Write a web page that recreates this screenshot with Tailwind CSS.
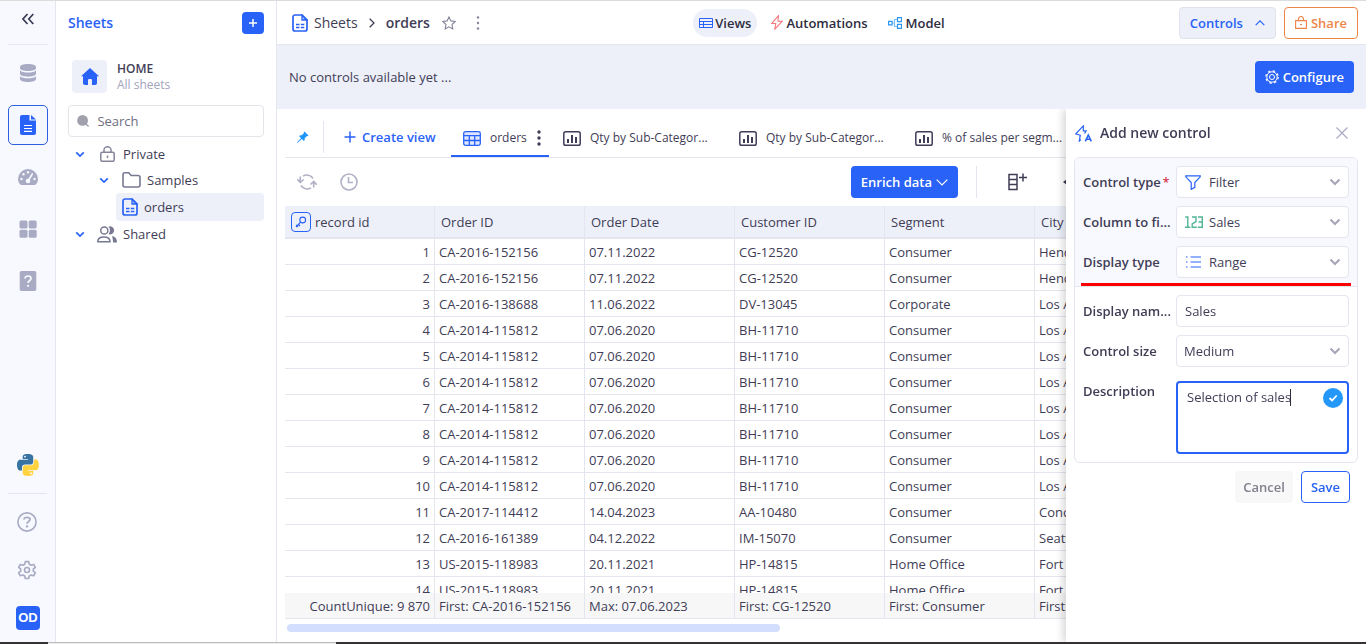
<!DOCTYPE html>
<html lang="en">
<head>
<meta charset="utf-8">
<title>orders - Sheets</title>
<meta name="viewport" content="width=device-width, initial-scale=1">
<script src="https://cdn.jsdelivr.net/npm/@tailwindcss/browser@4"></script>
</head>
<body class="flex h-screen flex-col overflow-hidden border-t border-[#dcdcdc] bg-white font-['Open_Sans','Noto_Sans',sans-serif] text-[13px] leading-5 text-[#3f3d56]">

<svg class="hidden" aria-hidden="true">
  <symbol id="sheet" viewBox="0 0 16 18"><path d="M3 1h7l5 5v9a2 2 0 0 1-2 2H3a2 2 0 0 1-2-2V3a2 2 0 0 1 2-2z" fill="none" stroke="currentColor" stroke-width="1.7"/><path d="M10 1v5h5z" fill="currentColor" fill-opacity=".35" stroke="currentColor" stroke-width="1.3"/><path d="M4 10.5h3.5M8.800 10.5h3.500M4 13.500h3.500M8.800 13.500h3.500" stroke="currentColor" stroke-width="1.500"/></symbol>
  <symbol id="down" viewBox="0 0 12 8"><path d="M1.500 1.500 6 6l4.500-4.500" fill="none" stroke="currentColor" stroke-width="2"/></symbol>
  <symbol id="chart" viewBox="0 0 18 15"><rect x=".8" y=".8" width="16.400" height="13.400" rx="1.800" fill="none" stroke="currentColor" stroke-width="1.500"/><path d="M5 12V8M9 12V4M13 12V6" stroke="currentColor" stroke-width="2"/></symbol>
</svg>

<div class="flex min-h-0 flex-1">
  <nav aria-label="Main" class="flex w-14 shrink-0 flex-col border-r border-[#e4e5ee] bg-[#f8f9fe] px-2 pb-1 text-[#a9abc4]">
    <button aria-label="Collapse" class="-mr-1 flex h-11 w-10 shrink-0 items-center justify-center border-b border-[#e4e5ee] pb-2 text-[#3a3b56]">
      <svg class="h-3 w-3" viewBox="0 0 12 12" fill="none" stroke="currentColor" stroke-width="1.700"><path d="M5.500 1 1 6l4.500 5M11.300 1 6.800 6l4.500 5"/></svg>
    </button>
    <div class="mt-2 flex flex-col gap-3">
      <a href="#" aria-label="Data" class="flex h-10 w-10 items-center justify-center"><svg class="h-5 w-4" viewBox="0 0 16 20" fill="currentColor"><path d="M0 4c0-1.700 3.500-3 8-3s8 1.300 8 3v1.300C16 7 12.500 8 8 8S0 7 0 5.300z"/><path d="M0 7.500C1.500 9 4.500 9.600 8 9.600S14.500 9 16 7.500v3.300c0 1.700-3.500 2.900-8 2.900s-8-1.200-8-2.900z"/><path d="M0 13.200c1.500 1.500 4.500 2 8 2s6.500-.5 8-2V16c0 1.700-3.500 3-8 3s-8-1.300-8-3z"/></svg></a>
      <a href="#" aria-label="Sheets" class="flex h-10 w-10 items-center justify-center rounded-[5px] border border-[#2d5fe0] bg-[#f4f7ff] text-[#2962f6]"><svg class="h-5 w-4" viewBox="0 0 16 20" fill="currentColor"><path d="M2 0h7.500v5.500H16V18a2 2 0 0 1-2 2H2a2 2 0 0 1-2-2V2a2 2 0 0 1 2-2z"/><path d="M11 0l5 4.500h-5z"/><path d="M4 10.500h8M4 13.500h8M4 16.300h8" stroke="#fff" stroke-width="1.200"/></svg></a>
      <a href="#" aria-label="Dashboards" class="flex h-10 w-10 items-center justify-center"><svg class="h-4 w-5" viewBox="0 0 20 16"><path d="M3 16C1 14.300 0 12.500 0 10a10 10 0 0 1 20 0c0 2.500-1 4.300-3 6z" fill="currentColor"/><g fill="#f8f9fe"><circle cx="3.500" cy="10" r="1.200"/><circle cx="5.500" cy="5.300" r="1.200"/><circle cx="10" cy="3.200" r="1.200"/><circle cx="16.500" cy="10" r="1.200"/><circle cx="10" cy="12" r="2.300"/></g><path d="m10 12 4.300-7" stroke="#f8f9fe" stroke-width="1.600" stroke-linecap="round"/></svg></a>
      <a href="#" aria-label="Apps" class="flex h-10 w-10 items-center justify-center"><svg class="h-[18px] w-[18px]" viewBox="0 0 18 18" fill="currentColor"><rect x=".5" y=".5" width="8" height="8" rx="1.500"/><rect x="9.700" y=".5" width="8" height="8" rx="1.500"/><rect x=".5" y="9.700" width="8" height="8" rx="1.500"/><rect x="9.700" y="9.700" width="8" height="8" rx="1.500"/></svg></a>
      <a href="#" aria-label="Guide" class="flex h-10 w-10 items-center justify-center"><svg class="h-5 w-[18px]" viewBox="0 0 18 20"><rect x=".7" width="16.600" height="20" rx="1.800" fill="currentColor"/><path d="M6 7.500C6 5.700 7.300 5 9 5s3.100.9 3.100 2.600C12.100 9.500 9 9.600 9 12" fill="none" stroke="#f8f9fe" stroke-width="1.700"/><circle cx="9" cy="14.800" r="1.100" fill="#f8f9fe"/></svg></a>
    </div>
    <a href="#" aria-label="Python" class="mt-auto flex h-10 w-10 items-center justify-center"><svg class="h-[22px] w-[22px]" viewBox="0 0 110 110"><path fill="#3873a3" d="M54 0C27 0 28.500 12 28.500 12v12.500h26.200v3.700H18S0 26 0 54.500 15.500 82 15.500 82H25V68.500S24.500 53 40.300 53h26S81 53.200 81 38.700V14.500S83.300 0 54 0zM39.800 8.400a4.700 4.700 0 1 1 0 9.400 4.700 4.700 0 0 1 0-9.400z"/><path fill="#ffd23f" d="M55.500 109.500c27 0 25.500-12 25.500-12V85H54.800v-3.700h36.700s18 2.200 18-26.300S94 27.500 94 27.500h-9.500V41s.5 15.500-15.300 15.500h-26S28.500 56.300 28.500 70.800V95s-2.300 14.500 27 14.500zm14.200-8.400a4.700 4.700 0 1 1 0-9.400 4.700 4.700 0 0 1 0 9.400z"/></svg></a>
    <hr class="my-2 border-[#e4e5ee]">
    <div class="flex flex-col gap-2">
      <a href="#" aria-label="Help" class="flex h-10 w-[38px] items-center justify-center"><svg class="h-5 w-5" viewBox="0 0 20 20" fill="none" stroke="currentColor" stroke-width="1.600"><circle cx="10" cy="10" r="9.100"/><path d="M7 7.600C7 6 8.300 5.300 10 5.300s3 .8 3 2.300c0 1.900-3 2-3 4.200" stroke-width="1.800"/><circle cx="10" cy="14.400" r="1.200" fill="currentColor" stroke="none"/></svg></a>
      <a href="#" aria-label="Settings" class="flex h-10 w-[38px] items-center justify-center"><svg class="h-5 w-5" viewBox="0 0 24 24" fill="none" stroke="currentColor" stroke-width="2"><circle cx="12" cy="12" r="3"/><path d="M10 2h4l.7 3 2.300 1.300 3-1 2 3.500-2.400 2v2.600l2.400 2-2 3.500-3-1-2.300 1.300-.7 3h-4l-.7-3L7 17.900l-3 1-2-3.500 2.400-2v-2.600L2 8.800l2-3.500 3 1L9.300 5z" stroke-linejoin="round"/></svg></a>
      <button class="flex h-10 w-10 items-center justify-center"><span class="flex h-6 w-6 items-center justify-center rounded bg-[#2962f6] font-['Liberation_Sans',sans-serif] text-[13px] font-bold text-white">OD</span></button>
    </div>
  </nav>

  <aside class="flex w-[221px] shrink-0 flex-col border-r border-[#e4e5ee] px-3">
    <div class="flex h-11 items-center justify-between">
      <h2 class="text-[14px] font-[550] text-[#2962f6]">Sheets</h2>
      <button aria-label="Add sheet" class="flex h-[22px] w-[22px] items-center justify-center rounded bg-[#2962f6] text-white"><svg class="h-2 w-2" viewBox="0 0 8 8" stroke="currentColor" stroke-width="1.500"><path d="M4 0v8M0 4h8"/></svg></button>
    </div>
    <a href="#" class="mt-3.5 flex items-center gap-2.5 px-1">
      <span class="flex h-[33px] w-[35px] items-center justify-center rounded bg-[#edf0f9] text-[#2962f6]"><svg class="h-[17px] w-[18px]" viewBox="0 0 18 17" fill="currentColor"><path d="M9 0 0 8.300h2V15c0 1.200.8 2 2 2h3v-4.500c0-1 .5-1.500 1.200-1.500h1.600c.7 0 1.200.5 1.200 1.500V17h3c1.200 0 2-.8 2-2V8.300h2z"/></svg></span>
      <span class="flex flex-col text-xs leading-4"><span class="pt-0.5 font-[550]">HOME</span><span class="text-[#a3a4bd]">All sheets</span></span>
    </a>
    <label class="mt-3 flex h-8 shrink-0 items-center gap-2 rounded border border-[#e4e4ea] px-2 text-[#a1a1ae]">
      <svg class="h-[14px] w-[14px]" viewBox="0 0 14 14"><circle cx="6.300" cy="6.300" r="6.100" fill="currentColor"/><path d="m10 10 3 3.300" stroke="currentColor" stroke-width="1.600"/></svg>
      <input type="text" aria-label="Search" placeholder="Search" class="w-full min-w-0 bg-transparent outline-none placeholder:text-[#6f6e80]">
    </label>
    <ul class="mt-1">
      <li class="flex h-[26px] items-center pl-[7px]"><svg class="h-[7px] w-2.5 text-[#2962f6]"><use href="#down"/></svg>
        <svg class="mr-2 ml-[15px] h-4 w-[15px] text-[#85859c]" viewBox="0 0 15 16" fill="none" stroke="currentColor" stroke-width="1.500"><rect x=".8" y="6.300" width="13.400" height="9" rx="1.500"/><path d="M4 6V4a3.500 3.200 0 0 1 7 0v2M7.500 9.500v2.500"/></svg>Private</li>
      <li class="flex h-[26px] items-center pl-[31px]"><svg class="h-[7px] w-2.5 text-[#2962f6]"><use href="#down"/></svg>
        <svg class="mr-1.5 ml-[13px] h-4 w-[19px] text-[#777891]" viewBox="0 0 19 16" fill="none" stroke="currentColor" stroke-width="1.600"><path d="M1 13V2.500Q1 .8 2.700.8h4l2.500 2.700H16q2 0 2 2V13q0 2-2 2H3q-2 0-2-2z"/></svg>Samples</li>
      <li><a href="#" class="ml-12 flex h-7 items-center gap-1.5 rounded bg-[#edf0f9] pl-1.5"><svg class="h-[18px] w-4 text-[#2962f6]"><use href="#sheet"/></svg>orders</a></li>
      <li class="flex h-[26px] items-center pl-[7px]"><svg class="h-[7px] w-2.5 text-[#2962f6]"><use href="#down"/></svg>
        <svg class="mr-1.5 ml-3 h-[17px] w-5 text-[#777891]" viewBox="0 0 20 17" fill="none" stroke="currentColor" stroke-width="1.500"><path d="M11.500.7a4 4 0 1 1 0 7.300c2-2 2-5.300 0-7.300zM15 10c3.300.6 5 2.700 5 6.500h-4c0-2.500-.4-4.600-1-6.500z" fill="currentColor" stroke="none"/><circle cx="7.300" cy="4.500" r="3.600"/><path d="M.8 15.700c0-3 2.300-4.700 6-4.700s6.200 1.700 6.200 4.700z"/></svg>Shared</li>
    </ul>
  </aside>

  <main class="flex min-w-0 flex-1 flex-col">
    <header class="grid h-11 shrink-0 grid-cols-[1fr_auto_1fr] items-center border-b border-[#e4e5ee] pr-2 pl-[15px]">
      <div class="flex items-center text-[14px]">
        <svg class="mr-1.5 h-[18px] w-4 text-[#2962f6]"><use href="#sheet"/></svg>
        <a href="#">Sheets</a>
        <svg class="mx-[11px] h-2.5 w-[6px]" viewBox="0 0 6 10" fill="none" stroke="currentColor" stroke-width="1.300"><path d="m.7.700 4.300 4.300L.7 9.300"/></svg>
        <span class="font-[550]">orders</span>
        <button aria-label="Favourite" class="ml-3 text-[#85859c]"><svg class="h-[14px] w-[14px]" viewBox="0 0 14 14" fill="none" stroke="currentColor" stroke-width="1.100"><path d="M7 .9l1.900 4 4.300.6-3.200 3 .8 4.400L7 10.800l-3.800 2.100.8-4.400-3.200-3 4.300-.6z"/></svg></button>
        <button aria-label="More" class="ml-5 text-[#85859c]"><svg class="h-[14px] w-1" viewBox="0 0 4 14" fill="currentColor"><circle cx="2" cy="1.500" r="1.200"/><circle cx="2" cy="7" r="1.200"/><circle cx="2" cy="12.500" r="1.200"/></svg></button>
      </div>
      <nav aria-label="Sections" class="mr-1.5 flex gap-2 font-[550] text-[#2e2d40]">
        <a href="#" class="flex h-7 items-center gap-0.5 rounded-full bg-[#edf0f9] px-1.5"><svg class="h-2.5 w-[14px]" viewBox="0 0 14 10" fill="none" stroke="#2962f6"><path d="M.5.500h13v9H.5zM.5 3.500h13M.5 6.500h13M4.500 3.500v6"/></svg>Views</a>
        <a href="#" class="flex h-7 items-center gap-[3px] px-1.5"><svg class="h-[15px] w-3" viewBox="0 0 12 15" fill="none" stroke="#f47a80" stroke-width="1.100"><path d="M7.500.7.8 8.500h4L3.800 14.200 11.200 6.200H7z"/></svg>Automations</a>
        <a href="#" class="flex h-7 items-center gap-1 px-1.5"><svg class="h-3 w-[14px]" viewBox="0 0 14 12" fill="none" stroke="#2a97f5" stroke-width="1.200"><path d="M9.500.6h4v4h-4zM9.500 7.400h4v4h-4zM.6 4.300h3.500v3.500H.6z"/><path d="M4 6h2.500M9.500 2.500h-3v7h3" stroke-opacity=".6"/></svg>Model</a>
      </nav>
      <div class="flex justify-end gap-2">
        <button class="flex h-8 items-center gap-3 rounded border border-[#e0e2ec] bg-[#edf0f9] px-2.5 font-[550] text-[#2962f6]">Controls<svg class="h-1.5 w-2.5" viewBox="0 0 10 6" fill="none" stroke="currentColor" stroke-width="1.200"><path d="m.7 5.200 4.300-4.300 4.300 4.300"/></svg></button>
        <button class="flex h-8 items-center gap-1 rounded border border-[#ee8548] px-2.5 font-[550] text-[#ee8548]"><svg class="h-[13px] w-3" viewBox="0 0 12 13" fill="none" stroke="currentColor" stroke-width="1.100"><path d="M.6 4.600h10.800v7.800H.6zM3.500 4.500V3a2.500 2.500 0 0 1 5 0v1.500M5 8.500h2"/></svg>Share</button>
      </div>
    </header>

    <section class="flex h-16 shrink-0 items-center justify-between bg-[#edf0f9] px-3 font-medium">
      <p>No controls available yet ...</p>
      <button class="flex h-8 items-center gap-1 rounded bg-[#2962f6] px-2.5 font-[550] text-white"><svg class="h-[14px] w-[14px]" viewBox="0 0 14 14" fill="none" stroke="currentColor"><circle cx="7" cy="7" r="2.500"/><circle cx="7" cy="7" r="5.200"/><circle cx="7" cy="7" r="6.200" stroke-width="1.200" stroke-dasharray="2.400 2.470"/></svg>Configure</button>
    </section>

    <div class="relative flex min-h-0 flex-1 flex-col overflow-hidden pl-2">
      <div class="flex h-[49px] shrink-0 items-center overflow-hidden border-b border-[#e4e5ee] pt-2 whitespace-nowrap">
        <button aria-label="Pin" class="flex h-8 w-[39px] shrink-0 items-center border-r border-[#e4e5ee] pl-3 text-[#1e96fb]"><svg class="h-3 w-3" viewBox="0 0 12 12" fill="currentColor"><path d="M7.500.5 11.500 4.500 10.300 5.300 9.700 5.200 7.700 7.300c.2 1.200 0 2-.8 2.700L4.800 8 1 11.600 0 12l.4-1L4 7.200 2 5.100c.8-.8 1.600-1 2.700-.8l2.100-2-.1-.7z"/></svg></button>
        <button class="flex w-[127px] shrink-0 items-center gap-1.5 pl-5 font-[550] text-[#2962f6]"><svg class="h-3 w-3" viewBox="0 0 12 12" stroke="currentColor" stroke-width="1.500"><path d="M6 .5v11M.5 6h11"/></svg>Create view</button>
        <div class="flex h-10 w-[98px] shrink-0 items-center border-b-2 border-[#2962f6] pt-1 pr-2 pl-3 text-xs">
          <svg class="mr-[9px] h-[15px] w-[18px]" viewBox="0 0 18 15" fill="none" stroke="#2962f6" stroke-width="1.300"><rect x=".7" y=".7" width="16.600" height="13.600" rx="1.800" fill="#dce6ff"/><path d="M.7 4.700h16.600M.7 9.500h16.600M6.300 4.700v9.600M11.700 4.700v9.600"/></svg><a href="#">orders</a>
          <button aria-label="View menu" class="ml-auto"><svg class="h-4 w-1" viewBox="0 0 4 16" fill="currentColor"><circle cx="2" cy="2" r="1.700"/><circle cx="2" cy="8" r="1.700"/><circle cx="2" cy="14" r="1.700"/></svg></button>
        </div>
        <a href="#" class="ml-0.5 flex w-44 shrink-0 items-center gap-[9px] pt-0.5 pl-3 text-xs"><svg class="h-[15px] w-[18px]"><use href="#chart"/></svg>Qty by Sub-Categor...</a>
        <a href="#" class="flex w-44 shrink-0 items-center gap-[9px] pt-0.5 pl-3 text-xs"><svg class="h-[15px] w-[18px]"><use href="#chart"/></svg>Qty by Sub-Categor...</a>
        <a href="#" class="flex w-44 shrink-0 items-center gap-[9px] pt-0.5 pl-3 text-xs"><svg class="h-[15px] w-[18px]"><use href="#chart"/></svg>% of sales per segm...</a>
      </div>

      <div class="flex h-12 shrink-0 items-center px-3">
        <button aria-label="Refresh" class="text-[#b0b1c5]"><svg class="h-4 w-5" viewBox="0 0 20 16" fill="none" stroke="currentColor" stroke-width="1.600"><path d="M6 2.200A7 7 0 0 1 16 4.500M14 13.800A7 7 0 0 1 4 11.500M3.300 2.500v6M.3 5.300l3 3.200 3.400-3M16.700 13.500v-6M13.500 10.500l3.200-3 3 3.200"/></svg></button>
        <button aria-label="History" class="ml-[23px] text-[#b0b1c5]"><svg class="h-[18px] w-[18px]" viewBox="0 0 18 18" fill="none" stroke="currentColor" stroke-width="1.600"><circle cx="9" cy="9" r="8"/><path d="M8.500 4v5.500h4.500"/></svg></button>
        <button class="ml-auto flex h-8 items-center gap-1 rounded bg-[#2962f6] px-2.5 font-[550] text-white">Enrich data<svg class="h-[7px] w-3" viewBox="0 0 12 7" fill="none" stroke="currentColor" stroke-width="1.200"><path d="m.7.700 5.300 5.300L11.300.7"/></svg></button>
        <div class="ml-[18px] flex h-8 w-[378px] items-center border-l border-[#e4e5ee] pl-[31px]">
          <button aria-label="Add column"><svg class="h-[18px] w-5" viewBox="0 0 20 18" fill="none" stroke="currentColor" stroke-width="1.500"><path d="M1 1.500h8v15H1zM1 6.500h8M1 11.500h8M15 .5v8M11 4.500h8"/></svg></button>
          <button aria-label="Code" class="ml-[35px]"><svg class="h-2.5 w-4" viewBox="0 0 16 10" fill="currentColor"><path d="M0 5l4-3v6zM12 2l4 3-4 3zM4 4.200h8v1.600H4z"/></svg></button>
        </div>
      </div>

      <div class="min-h-0 flex-1 overflow-hidden">
        <table class="w-[900px] table-fixed border-separate border-spacing-0 text-left whitespace-nowrap [&_td]:h-[26px] [&_td]:overflow-hidden [&_td]:border-r [&_td]:border-b [&_td]:border-[#e4e5ee] [&_td]:py-0 [&_td]:pr-1 [&_td]:pl-1 [&_td:first-child]:text-right [&_th]:h-[33px] [&_th]:border-r [&_th]:border-b-2 [&_th]:border-[#e4e5f0] [&_th]:bg-[#edf0f9] [&_th]:px-1.5 [&_th]:py-0 [&_th]:font-normal [&_tfoot_td]:sticky [&_tfoot_td]:bottom-0 [&_tfoot_td]:bg-[#f7f7f8]">
          <thead><tr>
            <th scope="col"><span class="flex items-center gap-1"><span class="flex h-5 w-5 items-center justify-center rounded border border-[#2962f6] text-[#2962f6]"><svg class="h-3 w-3" viewBox="0 0 12 12" fill="none" stroke="currentColor" stroke-width="1.100"><circle cx="7.700" cy="4" r="2.900"/><path d="M5.600 6.200 1 11M3.500 8.500 5 10M1.200 8.800 3 11"/></svg></span>record id</span></th>
            <th scope="col">Order ID</th><th scope="col">Order Date</th><th scope="col">Customer ID</th><th scope="col">Segment</th><th scope="col">City</th>
          </tr></thead>
          <tbody>
            <tr><td>1</td><td>CA-2016-152156</td><td>07.11.2022</td><td>CG-12520</td><td>Consumer</td><td>Henderson</td></tr>
            <tr><td>2</td><td>CA-2016-152156</td><td>07.11.2022</td><td>CG-12520</td><td>Consumer</td><td>Henderson</td></tr>
            <tr><td>3</td><td>CA-2016-138688</td><td>11.06.2022</td><td>DV-13045</td><td>Corporate</td><td>Los Angeles</td></tr>
            <tr><td>4</td><td>CA-2014-115812</td><td>07.06.2020</td><td>BH-11710</td><td>Consumer</td><td>Los Angeles</td></tr>
            <tr><td>5</td><td>CA-2014-115812</td><td>07.06.2020</td><td>BH-11710</td><td>Consumer</td><td>Los Angeles</td></tr>
            <tr><td>6</td><td>CA-2014-115812</td><td>07.06.2020</td><td>BH-11710</td><td>Consumer</td><td>Los Angeles</td></tr>
            <tr><td>7</td><td>CA-2014-115812</td><td>07.06.2020</td><td>BH-11710</td><td>Consumer</td><td>Los Angeles</td></tr>
            <tr><td>8</td><td>CA-2014-115812</td><td>07.06.2020</td><td>BH-11710</td><td>Consumer</td><td>Los Angeles</td></tr>
            <tr><td>9</td><td>CA-2014-115812</td><td>07.06.2020</td><td>BH-11710</td><td>Consumer</td><td>Los Angeles</td></tr>
            <tr><td>10</td><td>CA-2014-115812</td><td>07.06.2020</td><td>BH-11710</td><td>Consumer</td><td>Los Angeles</td></tr>
            <tr><td>11</td><td>CA-2017-114412</td><td>14.04.2023</td><td>AA-10480</td><td>Consumer</td><td>Concord</td></tr>
            <tr><td>12</td><td>CA-2016-161389</td><td>04.12.2022</td><td>IM-15070</td><td>Consumer</td><td>Seattle</td></tr>
            <tr><td>13</td><td>US-2015-118983</td><td>20.11.2021</td><td>HP-14815</td><td>Home Office</td><td>Fort Worth</td></tr>
            <tr><td>14</td><td>US-2015-118983</td><td>20.11.2021</td><td>HP-14815</td><td>Home Office</td><td>Fort Worth</td></tr>
          </tbody>
          <tfoot><tr><td>CountUnique: 9 870</td><td>First: CA-2016-152156</td><td>Max: 07.06.2023</td><td>First: CG-12520</td><td>First: Consumer</td><td>First: Henderson</td></tr></tfoot>
        </table>
      </div>
      <div class="h-[23px] shrink-0 px-0.5 pt-[5px]"><div class="h-2 w-[493px] rounded-full bg-[#d3ddfd]"></div></div>

      <!-- Drawer over the table -->
      <form aria-label="Add new control" class="absolute inset-y-0 right-0 flex w-[300px] flex-col bg-white px-2 shadow-[-3px_0_8px_rgba(0,0,0,0.16)]">
        <div class="flex h-12 shrink-0 items-center pr-2.5 pl-px">
          <svg class="h-[17px] w-[17px]" viewBox="0 0 17 17" fill="none" stroke="#2962f6" stroke-width="1.200"><path d="M5.800 14.500 4.300 16l1-5.700L.8 8.800 8.300.9v5h2.800L9.500 8.500M5 10.300l-.2 3"/><path d="M10.300 16.300 13.300 10l3 6.300M11.500 14.300h3.800" stroke-width="1.600"/></svg>
          <h2 class="ml-2 text-[14px] font-[550]">Add new control</h2>
          <button type="button" aria-label="Close" class="ml-auto text-[#a9abc4]"><svg class="h-3 w-3" viewBox="0 0 12 12" stroke="currentColor" stroke-width="1.200"><path d="m.5.500 11 11M11.500.500.500 11.500"/></svg></button>
        </div>
        <div class="rounded-md border border-[#e4e5ee]">
          <div class="relative flex flex-col gap-2 rounded-t-md border-b border-[#e4e5ee] bg-[#f8f9fe] p-2">
            <div class="flex items-center gap-2">
              <label for="type" class="w-[85px] shrink-0 font-[550] whitespace-nowrap">Control type<span class="ml-0.5 text-xs leading-4 text-[#d6344a]">*</span></label>
              <div class="relative min-w-0 flex-1">
                <select id="type" class="h-8 w-full appearance-none rounded border border-[#e4e5ee] bg-white pl-8"><option>Filter</option></select>
                <svg class="pointer-events-none absolute top-[9px] left-[9px] h-[15px] w-4" viewBox="0 0 16 15" fill="none" stroke="#2962f6" stroke-width="1.200"><path d="M.8.800h14.400v1L9.800 7.500v4.800l-3.600 2V7.500L.8 1.800z"/></svg>
                <svg class="pointer-events-none absolute top-3 right-2 h-2 w-3 text-[#a5a5b7]"><use href="#down"/></svg>
              </div>
            </div>
            <div class="flex items-center gap-2">
              <label for="column" class="w-[85px] shrink-0 font-[550] whitespace-nowrap">Column to fi...</label>
              <div class="relative min-w-0 flex-1">
                <select id="column" class="h-8 w-full appearance-none rounded border border-[#e4e5ee] bg-white pl-8"><option>Sales</option></select>
                <svg class="pointer-events-none absolute top-2.5 left-[9px] h-3 w-[18px]" viewBox="0 0 18 12" fill="none" stroke="#52b596" stroke-width="1.400"><path d="M.3 1h2.500v10.300M0 11.300h5.300M7 1h4v4.500L7.200 8v3.300h4.500M13 1h4.300v10.300h-4.500M13.500 6h3.500"/></svg>
                <svg class="pointer-events-none absolute top-3 right-2 h-2 w-3 text-[#a5a5b7]"><use href="#down"/></svg>
              </div>
            </div>
            <div class="flex items-center gap-2">
              <label for="display" class="w-[85px] shrink-0 font-[550] whitespace-nowrap">Display type</label>
              <div class="relative min-w-0 flex-1">
                <select id="display" class="h-8 w-full appearance-none rounded border border-[#e4e5ee] bg-white pl-8"><option>Range</option></select>
                <svg class="pointer-events-none absolute top-2.5 left-2.5 h-3 w-[15px]" viewBox="0 0 15 12" stroke="#2962f6" stroke-width="1.100"><path d="M0 1h1.500M4.500 1H15M0 6h1.500M4.500 6H15M0 11h1.500M4.500 11H15"/></svg>
                <svg class="pointer-events-none absolute top-3 right-2 h-2 w-3 text-[#a5a5b7]"><use href="#down"/></svg>
              </div>
            </div>
            <div class="absolute right-1.5 bottom-0 left-1.5 h-[3px] bg-[#fe0000]"></div>
          </div>
          <div class="flex flex-col gap-2 p-2">
            <div class="flex items-center gap-2">
              <label for="name" class="w-[85px] shrink-0 font-[550] whitespace-nowrap">Display nam...</label>
              <input id="name" type="text" value="Sales" class="h-8 min-w-0 flex-1 rounded border border-[#e4e5ee] px-2">
            </div>
            <div class="flex items-center gap-2">
              <label for="size" class="w-[85px] shrink-0 font-[550] whitespace-nowrap">Control size</label>
              <div class="relative min-w-0 flex-1">
                <select id="size" class="h-8 w-full appearance-none rounded border border-[#e4e5ee] bg-white pl-[7px]"><option>Medium</option></select>
                <svg class="pointer-events-none absolute top-3 right-2 h-2 w-3 text-[#a5a5b7]"><use href="#down"/></svg>
              </div>
            </div>
            <div class="flex items-start gap-2 pt-1.5">
              <label for="description" class="w-[85px] shrink-0 font-[550] whitespace-nowrap">Description</label>
              <div class="relative min-w-0 flex-1">
                <textarea id="description" class="block h-[73px] w-full resize-none rounded border-2 border-[#2962f6] px-[9px] py-1 outline-none">Selection of sales</textarea>
                <span class="absolute top-2 left-[114px] h-[17px] w-px bg-[#2e2d40]"></span>
                <svg class="absolute top-[7px] right-1.5 h-5 w-5" viewBox="0 0 20 20"><circle cx="10" cy="10" r="10" fill="#2398f9"/><path d="m6.500 10 2.600 2.500 4.600-5" fill="none" stroke="#fff" stroke-width="1.800"/></svg>
              </div>
            </div>
          </div>
        </div>
        <div class="mt-2 flex justify-end gap-2 pr-2">
          <button type="button" class="h-8 rounded bg-[#f8f8f8] px-2 font-[550] text-[#80808e]">Cancel</button>
          <button type="submit" class="h-8 rounded border border-[#2962f6] px-[9px] font-[550] text-[#2962f6]">Save</button>
        </div>
      </form>
    </div>
  </main>
</div>
<div class="flex h-0.5 shrink-0 bg-[#343233]"><div class="w-12"></div><div class="w-72 border-t border-[#bdbdbd] bg-[#ececec]"></div></div>
</body>
</html>
